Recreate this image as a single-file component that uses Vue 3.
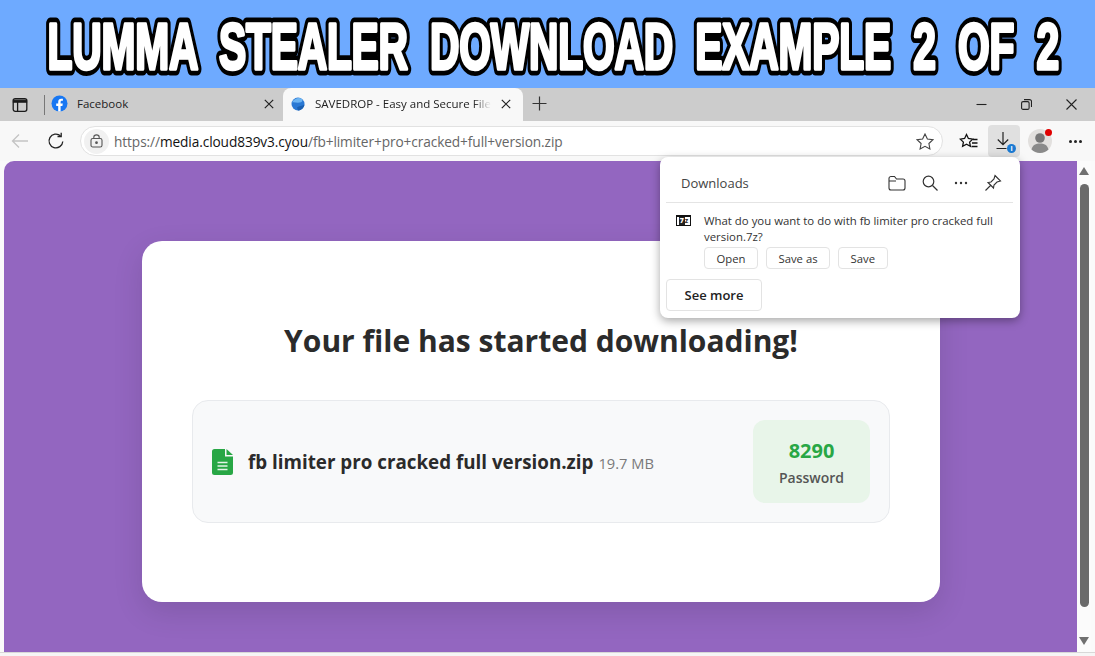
<script setup>
const title = 'LUMMA  STEALER  DOWNLOAD  EXAMPLE  2  OF  2'
const actions = ['Open', 'Save as', 'Save']
</script>

<template>
  <div class="window">
    <header class="banner">
      <svg class="headline" width="1095" height="88" viewBox="0 0 1095 88">
        <defs>
          <text id="headline-text" class="headline-text" x="0" y="0" transform="translate(47.5 68.5) scale(0.637 1)">{{ title }}</text>
        </defs>
        <use href="#headline-text" class="layer-outline" />
        <use href="#headline-text" class="layer-fill" />
      </svg>
    </header>

    <div class="tabstrip">
      <div class="strip-start">
        <svg width="16" height="16" viewBox="0 0 16 16" fill="none" stroke="#1b1b1b" stroke-width="1.3">
          <rect x="1.2" y="1.7" width="13.6" height="12.6" rx="2" />
          <path d="M1.5 3.2h13v1.9h-13z" fill="#1b1b1b" />
          <path d="M5.6 5v9" />
        </svg>
      </div>
      <span class="strip-sep"></span>
      <div class="tab tab-idle">
        <svg class="favicon" width="17" height="17" viewBox="0 0 17 17">
          <circle cx="8.5" cy="8.5" r="8" fill="#1877f2" />
          <path d="M7.2 16.5v-5.6H5.2V8.6h2V6.8c0-2 1.2-3.1 3-3.1.9 0 1.7.1 1.7.1v2h-1c-1 0-1.3.6-1.3 1.2v1.6h2.2l-.4 2.3H9.6v5.6z" fill="#fff" />
        </svg>
        <span class="tab-label">Facebook</span>
        <svg class="tab-close" width="10" height="10" viewBox="0 0 10 10" stroke="#222" stroke-width="1.2"><path d="M.8.8l8.4 8.4M9.2.8L.8 9.2" /></svg>
      </div>
      <div class="tab tab-active">
        <svg class="favicon" width="14" height="14" viewBox="0 0 14 14">
          <circle cx="7" cy="7" r="6.5" fill="#2a78d4" />
          <path d="M1 5.5C3 1.5 8 0 11 2c1 1 .5 3-2 3.5C6 6 3 5 1 5.5z" fill="#6db4f2" />
          <path d="M7 13.5c3 0 6-2.500 6.500-6C11 9 8 9 6 10.500z" fill="#1b5fb0" />
        </svg>
        <span class="tab-label tab-fade">SAVEDROP - Easy and Secure File</span>
        <svg class="tab-close" width="10" height="10" viewBox="0 0 10 10" stroke="#222" stroke-width="1.2"><path d="M.8.8l8.4 8.4M9.2.8L.8 9.2" /></svg>
      </div>
      <svg class="new-tab" width="15" height="15" viewBox="0 0 15 15" stroke="#333" stroke-width="1.2"><path d="M7.5.5v14M.5 7.500h14" /></svg>
      <div class="window-controls">
        <svg width="11" height="11" viewBox="0 0 11 11" stroke="#222" stroke-width="1.1"><path d="M.5 5.500h10" /></svg>
        <svg width="11" height="11" viewBox="0 0 11 11" fill="none" stroke="#222" stroke-width="1.1">
          <rect x=".6" y="2.600" width="7.500" height="7.800" rx="1.500" />
          <path d="M3 .6h5.500a2 2 0 0 1 2 2V8" />
        </svg>
        <svg width="11" height="11" viewBox="0 0 11 11" stroke="#222" stroke-width="1.1"><path d="M.5.5l10 10M10.500.5l-10 10" /></svg>
      </div>
    </div>

    <div class="toolbar">
      <svg class="tool-back" width="18" height="16" viewBox="0 0 18 16" fill="none" stroke="#c4c4c4" stroke-width="1.3"><path d="M17 8H1.500M8 1.500L1.500 8 8 14.500" /></svg>
      <svg class="tool-reload" width="18" height="18" viewBox="0 0 18 18" fill="none" stroke="#222" stroke-width="1.3">
        <path d="M15.800 9.500A6.900 6.900 0 1 1 13.500 3.800" />
        <path d="M14.200 .8v3.700h-3.700" />
      </svg>
      <div class="address">
        <span class="lock">
          <svg width="13" height="14" viewBox="0 0 13 14" fill="none" stroke="#555" stroke-width="1.100">
            <rect x="1" y="4.500" width="11" height="8.500" rx="1.800" />
            <path d="M3.800 4.500V3.200a2.700 2.300 0 0 1 5.400 0v1.300" />
            <circle cx="6.500" cy="8.700" r=".8" fill="#555" />
          </svg>
        </span>
        <span class="url"><span class="url-dim">https://</span><span class="url-host">media.cloud839v3.cyou</span><span class="url-dim">/fb+limiter+pro+cracked+full+version.zip</span></span>
        <svg class="star" width="18" height="17" viewBox="0 0 18 17" fill="none" stroke="#444" stroke-width="1.100"><path d="M9 1l2.400 5 5.500.7-4 3.800 1 5.400L9 13.300l-4.900 2.600 1-5.400-4-3.800 5.500-.7z" /></svg>
      </div>
      <svg class="fav-list" width="19" height="17" viewBox="0 0 19 17" fill="none" stroke="#111" stroke-width="1.300">
        <path d="M7.500 1.500l1.900 4 4.300.6-3.100 3 .8 4.300-3.900-2.100-3.900 2.100.8-4.300-3.100-3 4.300-.6z" />
        <path d="M14 6.500h4.500M13 10h5.500M12.500 13.500h6" />
      </svg>
      <div class="download-btn">
        <svg width="18" height="20" viewBox="0 0 18 20" fill="none" stroke="#222" stroke-width="1.200"><path d="M8 1v12.500M2.800 8.500L8 13.700l5.200-5.200M1.500 17.500h10" /></svg>
        <span class="download-badge">i</span>
      </div>
      <div class="profile">
        <svg width="24" height="24" viewBox="0 0 24 24">
          <circle cx="12" cy="12" r="12" fill="#e2e0de" />
          <circle cx="12" cy="9" r="4.800" fill="#777" />
          <path d="M3.500 20.500c1-4.500 4.500-6 8.500-6s7.500 1.500 8.500 6A12 12 0 0 1 12 24a12 12 0 0 1-8.500-3.500z" fill="#8a8a8a" />
        </svg>
        <span class="profile-dot"></span>
      </div>
      <div class="tool-more"><i></i><i></i><i></i></div>
    </div>

    <div class="viewport">
      <main class="page">
        <section class="card">
          <h2 class="card-title">Your file has started downloading!</h2>
          <div class="file-row">
            <svg class="file-icon" width="21" height="26" viewBox="0 0 21 26">
              <path d="M2.500 0H13v7.500h8V23.500a2.500 2.500 0 0 1-2.500 2.500h-16A2.500 2.500 0 0 1 0 23.500v-21A2.500 2.500 0 0 1 2.500 0z" fill="#28a745" />
              <path d="M14.500 0L21 6h-6.500z" fill="#28a745" />
              <path d="M5.500 13.500h10M5.500 17h10M5.500 20.500h10" stroke="#e4f3e8" stroke-width="1.600" />
            </svg>
            <div class="file-text">
              <span class="file-name">fb limiter pro cracked full version.zip</span>
              <span class="file-size">19.7 MB</span>
            </div>
            <div class="password">
              <strong class="password-code">8290</strong>
              <span class="password-label">Password</span>
            </div>
          </div>
        </section>
      </main>
      <aside class="scrollbar">
        <span class="arrow arrow-up"></span>
        <span class="thumb"></span>
        <span class="arrow arrow-down"></span>
      </aside>

      <div class="downloads">
        <div class="dl-head">
          <span class="dl-title">Downloads</span>
          <div class="dl-icons">
            <svg width="18" height="16" viewBox="0 0 18 16" fill="none" stroke="#333" stroke-width="1.100"><path d="M1 3.500a2 2 0 0 1 2-2h3.500l2 2.500H15a2 2 0 0 1 2 2v7a2 2 0 0 1-2 2H3a2 2 0 0 1-2-2zM1 6h7" /></svg>
            <svg width="16" height="16" viewBox="0 0 16 16" fill="none" stroke="#333" stroke-width="1.200"><circle cx="6.500" cy="6.500" r="5.300" /><path d="M10.500 10.500l5 5" /></svg>
            <svg width="14" height="4" viewBox="0 0 14 4" fill="#333"><circle cx="2" cy="2" r="1.200" /><circle cx="7" cy="2" r="1.200" /><circle cx="12" cy="2" r="1.200" /></svg>
            <svg width="18" height="18" viewBox="0 0 18 18" fill="none" stroke="#333" stroke-width="1.100"><path d="M11 1.500l5.500 5.500-3.500 1-3 3-.5 3L4 8.500l3-.5 3-3zM6.500 11.500L1.500 16.500" /></svg>
          </div>
        </div>
        <div class="dl-item">
          <span class="sevenz"><b>7</b>z</span>
          <div class="dl-body">
            <p class="dl-question">What do you want to do with fb limiter pro cracked full version.7z?</p>
            <div class="dl-actions">
              <button v-for="action in actions" :key="action" class="dl-action" type="button">{{ action }}</button>
            </div>
          </div>
        </div>
        <button class="see-more" type="button">See more</button>
      </div>
    </div>
    <div class="bottom-edge"></div>
  </div>
</template>

<style scoped>
.window {
  width: 1095px;
  height: 656px;
  display: flex;
  flex-direction: column;
  overflow: hidden;
  background: #fafafa;
  font-family: "Open Sans", "Noto Sans", sans-serif;
  color: #222;
}
.banner {
  height: 88px;
  flex: none;
  background: #6eaaff;
  overflow: hidden;
}
.headline {
  display: block;
}
.headline-text {
  font-family: "Liberation Sans", sans-serif;
  font-size: 64px;
  font-weight: 700;
  white-space: pre;
  letter-spacing: -0.3px;
}
.layer-outline {
  fill: #000;
  stroke: #000;
  stroke-width: 13px;
  stroke-linejoin: round;
}
.layer-fill {
  fill: #fff;
  stroke: #fff;
  stroke-width: 3.500px;
  stroke-linejoin: round;
}
.tabstrip {
  height: 33px;
  flex: none;
  background: #cccccc;
  display: flex;
  align-items: center;
}
.strip-start {
  width: 40px;
  display: flex;
  justify-content: center;
}
.strip-sep {
  width: 1px;
  height: 20px;
  margin-left: 4px;
  background: #777;
}
.tab {
  display: flex;
  align-items: center;
  height: 33px;
  box-sizing: border-box;
  padding-bottom: 2px;
  font-size: 11.500px;
}
.tab-idle {
  width: 232px;
  margin-left: 6px;
}
.tab-idle .favicon {
  margin-right: 9px;
}
.tab-idle .tab-close {
  margin-left: auto;
  margin-right: 9px;
}
.tab-active {
  width: 240px;
  padding-left: 8px;
  background: #f8f8f8;
  border-radius: 8px 8px 0 0;
}
.tab-active .favicon {
  margin-right: 10px;
}
.tab-fade {
  width: 176px;
  white-space: nowrap;
  overflow: hidden;
  -webkit-mask-image: linear-gradient(to right, #000 90%, transparent);
  mask-image: linear-gradient(to right, #000 90%, transparent);
}
.tab-active .tab-close {
  margin-left: 10px;
}
.new-tab {
  margin: 0 0 2px 9px;
}
.window-controls {
  margin-left: auto;
  padding-right: 18px;
  display: flex;
  gap: 34px;
}
.toolbar {
  height: 40px;
  flex: none;
  background: #f8f8f8;
  display: flex;
  align-items: center;
}
.tool-back {
  margin-left: 11px;
}
.tool-reload {
  margin-left: 18px;
}
.address {
  width: 863px;
  height: 30px;
  margin-left: 15px;
  box-sizing: border-box;
  border: 1px solid #e2e2e2;
  border-radius: 16px;
  background: #fff;
  display: flex;
  align-items: center;
  padding-left: 3px;
}
.lock {
  width: 25px;
  height: 25px;
  border-radius: 50%;
  background: #f1f1f1;
  display: flex;
  align-items: center;
  justify-content: center;
}
.url {
  margin-left: 5px;
  font-size: 13.700px;
  letter-spacing: -0.1px;
  white-space: nowrap;
}
.url-dim {
  color: #666;
}
.url-host {
  color: #111;
}
.star {
  margin-left: auto;
  margin-right: 8px;
}
.fav-list {
  margin-left: 16px;
}
.download-btn {
  position: relative;
  width: 32px;
  height: 32px;
  margin-left: 10px;
  border-radius: 4px;
  background: #e0e0e0;
  display: flex;
  align-items: center;
  justify-content: center;
}
.download-badge {
  position: absolute;
  right: 4px;
  bottom: 4px;
  width: 9px;
  height: 9px;
  border-radius: 50%;
  background: #1b7ad2;
  color: #fff;
  font-size: 7px;
  font-weight: 700;
  line-height: 9px;
  text-align: center;
}
.profile {
  position: relative;
  width: 24px;
  height: 24px;
  margin-left: 8px;
}
.profile-dot {
  position: absolute;
  top: 0;
  right: 0;
  width: 7px;
  height: 7px;
  border-radius: 50%;
  background: #e00000;
}
.tool-more {
  margin-left: 17px;
  display: flex;
  gap: 2px;
}
.tool-more i {
  width: 3px;
  height: 3px;
  border-radius: 50%;
  background: #222;
}
.viewport {
  position: relative;
  flex: 1;
  min-height: 0;
  display: flex;
  padding-left: 4px;
  padding-right: 4px;
}
.page {
  flex: 1;
  background: #9366c0;
  border-radius: 10px 0 0 0;
  display: flex;
  justify-content: center;
  align-items: flex-start;
  padding-top: 80px;
}
.card {
  width: 798px;
  height: 361px;
  margin-left: 1px;
  box-sizing: border-box;
  background: #fff;
  border-radius: 20px;
  box-shadow: 0 10px 30px rgba(0, 0, 0, 0.12);
  padding: 77px 50px 0;
}
.card-title {
  margin: 0 0 37px;
  height: 45px;
  font-size: 30px;
  font-weight: 700;
  line-height: 45px;
  text-align: center;
  color: #2b2b2b;
}
.file-row {
  height: 123px;
  box-sizing: border-box;
  border: 1px solid #e8eaed;
  border-radius: 16px;
  background: #f8f9fa;
  display: flex;
  align-items: center;
  padding: 0 19px 0 19px;
}
.file-icon {
  flex: none;
  margin-right: 15px;
}
.file-text {
  display: flex;
  align-items: baseline;
  gap: 5px;
}
.file-name {
  font-size: 18.800px;
  font-weight: 700;
  color: #2b2b2b;
}
.file-size {
  font-size: 14.700px;
  color: #7a7a7a;
}
.password {
  margin-left: auto;
  width: 117px;
  height: 83px;
  border-radius: 12px;
  background: #e8f5e9;
  display: flex;
  flex-direction: column;
  align-items: center;
  justify-content: center;
  gap: 4px;
}
.password-code {
  font-size: 20px;
  font-weight: 700;
  color: #28a745;
}
.password-label {
  font-size: 14px;
  font-weight: 600;
  color: #555;
}
.scrollbar {
  width: 14px;
  flex: none;
  background: #fbfbfb;
  display: flex;
  flex-direction: column;
  align-items: center;
  padding: 6px 0 7px;
  box-sizing: border-box;
}
.arrow {
  width: 0;
  height: 0;
  border-left: 5px solid transparent;
  border-right: 5px solid transparent;
}
.arrow-up {
  border-bottom: 8px solid #707070;
}
.arrow-down {
  border-top: 8px solid #707070;
}
.thumb {
  width: 9px;
  flex: 1;
  margin: 9px 0 30px;
  border-radius: 5px;
  background: #6a6a6a;
}
.downloads {
  position: absolute;
  left: 660px;
  top: -4px;
  width: 360px;
  height: 161px;
  box-sizing: border-box;
  background: #fff;
  border-radius: 8px;
  box-shadow: 0 3px 10px rgba(0, 0, 0, 0.35);
  padding: 0 7px 0 6px;
}
.dl-head {
  height: 46px;
  box-sizing: border-box;
  padding: 7px 11px 0 15px;
  border-bottom: 1px solid #e4e4e4;
  display: flex;
  align-items: center;
}
.dl-title {
  font-size: 13px;
  font-weight: 500;
  color: #444;
}
.dl-icons {
  margin-left: auto;
  display: flex;
  align-items: center;
  gap: 16px;
}
.dl-item {
  display: flex;
  padding: 10px 0 0 10px;
}
.sevenz {
  width: 15px;
  height: 11px;
  margin-top: 2px;
  box-sizing: border-box;
  border: 1px solid #111;
  border-top-width: 2px;
  font-size: 7px;
  font-weight: 700;
  line-height: 8px;
  flex: none;
  display: flex;
  justify-content: center;
}
.sevenz b {
  background: #222;
  color: #fff;
  padding: 0 1px;
}
.dl-body {
  margin-left: 13px;
}
.dl-question {
  margin: 0;
  width: 300px;
  font-size: 11.400px;
  line-height: 16px;
  color: #333;
}
.dl-actions {
  margin-top: 2px;
  display: flex;
  gap: 8px;
}
.dl-action {
  height: 22px;
  box-sizing: border-box;
  padding: 0 11.500px;
  border: 1px solid #e3e3e3;
  border-radius: 4px;
  background: #fff;
  font-family: inherit;
  font-size: 11.300px;
  color: #333;
}
.see-more {
  display: block;
  margin-top: 10px;
  width: 96px;
  height: 32px;
  border: 1px solid #e3e3e3;
  border-radius: 4px;
  background: #fff;
  font-family: inherit;
  font-size: 13px;
  font-weight: 600;
  color: #222;
}
.bottom-edge {
  height: 4px;
  flex: none;
  background: #f6f6f6;
  border-top: 1px solid #d8d8d8;
  box-sizing: border-box;
}
</style>
